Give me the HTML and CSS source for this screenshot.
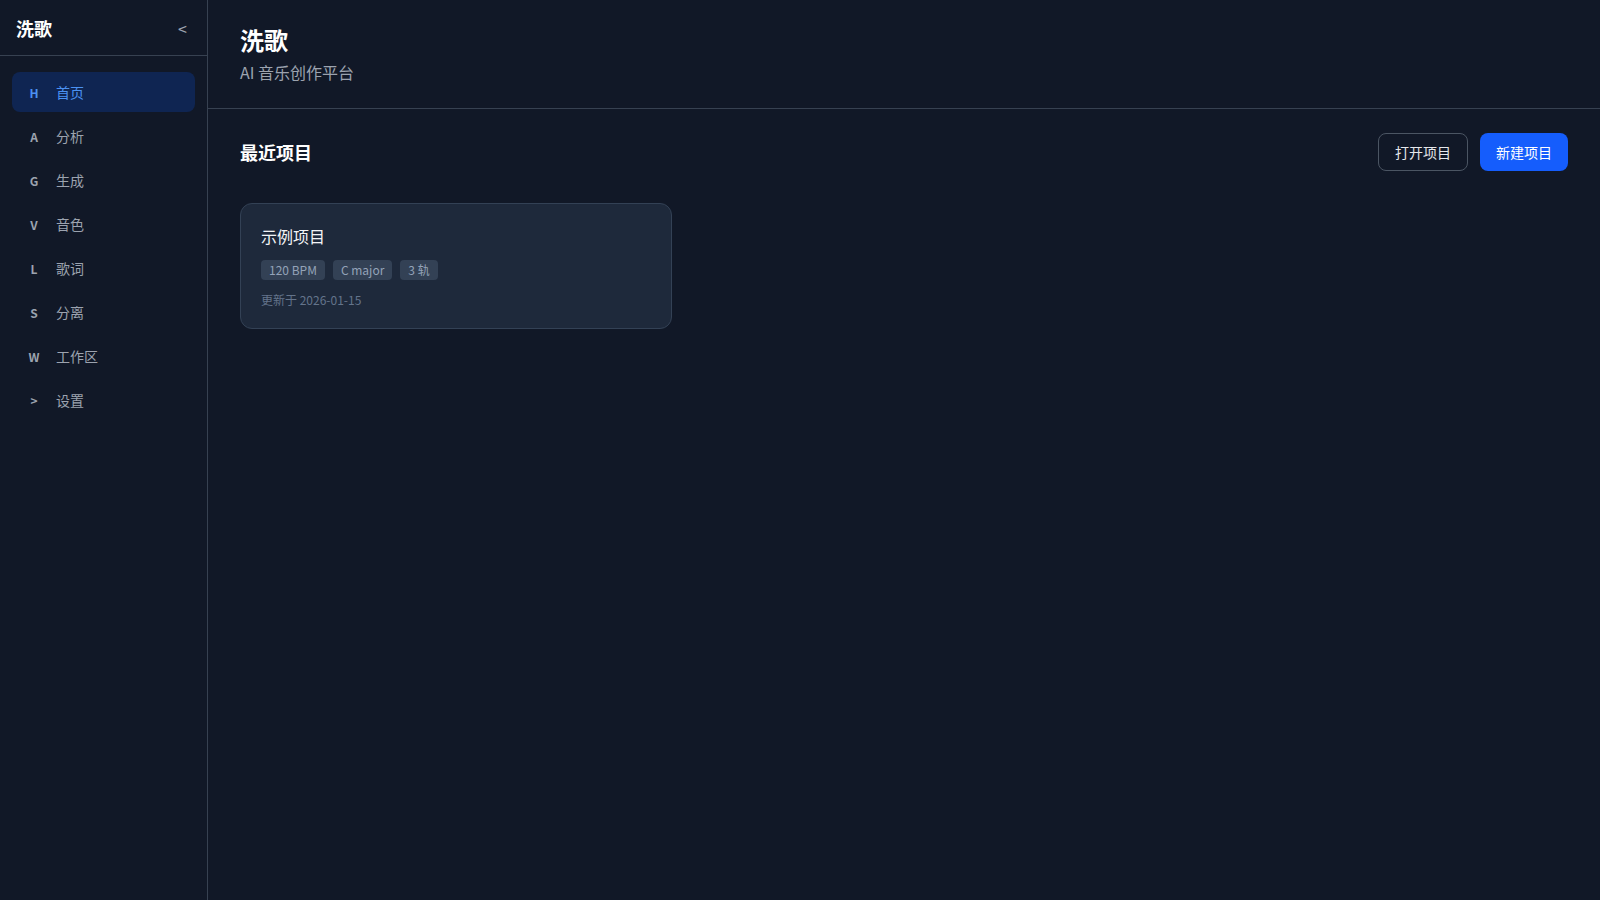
FILE: index.html
```html
<!DOCTYPE html>
<html lang="zh-CN">
<head>
<meta charset="utf-8">
<title>洗歌</title>
<link rel="stylesheet" href="styles.css">
</head>
<body>
<div class="app">
  <aside class="sidebar">
    <div class="sidebar-header">
      <span class="brand">洗歌</span>
      <button class="collapse">&lt;</button>
    </div>
    <nav class="nav">
      <a class="nav-item active"><span class="key">H</span><span>首页</span></a>
      <a class="nav-item"><span class="key">A</span><span>分析</span></a>
      <a class="nav-item"><span class="key">G</span><span>生成</span></a>
      <a class="nav-item"><span class="key">V</span><span>音色</span></a>
      <a class="nav-item"><span class="key">L</span><span>歌词</span></a>
      <a class="nav-item"><span class="key">S</span><span>分离</span></a>
      <a class="nav-item"><span class="key">W</span><span>工作区</span></a>
      <a class="nav-item"><span class="key">&gt;</span><span>设置</span></a>
    </nav>
  </aside>
  <main class="main">
    <header class="page-header">
      <h1 class="page-title">洗歌</h1>
      <p class="page-sub">AI 音乐创作平台</p>
    </header>
    <section class="content">
      <div class="section-head">
        <h2 class="section-title">最近项目</h2>
        <div class="actions">
          <button class="btn btn-outline">打开项目</button>
          <button class="btn btn-primary">新建项目</button>
        </div>
      </div>
      <div class="grid">
        <div class="card">
          <div class="card-title">示例项目</div>
          <div class="tags">
            <span class="tag">120 BPM</span>
            <span class="tag">C major</span>
            <span class="tag">3 轨</span>
          </div>
          <div class="card-date">更新于 2026-01-15</div>
        </div>
      </div>
    </section>
  </main>
</div>
</body>
</html>
```

FILE: styles.css
```css
* { box-sizing: border-box; }
html, body {
  margin: 0;
  height: 100%;
  background: #111827;
  color: #f3f4f6;
  font-family: "Noto Sans CJK SC", "Noto Sans", sans-serif;
}
.app {
  display: flex;
  height: 100vh;
}
.sidebar {
  width: 208px;
  flex-shrink: 0;
  border-right: 1px solid #374151;
  background: #111827;
  display: flex;
  flex-direction: column;
}
.sidebar-header {
  height: 56px;
  border-bottom: 1px solid #374151;
  display: flex;
  align-items: center;
  justify-content: space-between;
  padding: 0 16px;
}
.brand {
  font-size: 18px;
  font-weight: 700;
  color: #ffffff;
}
.collapse {
  background: none;
  border: none;
  color: #9ca3af;
  font-family: inherit;
  font-size: 16px;
  line-height: 20px;
  padding: 0 4px;
  cursor: pointer;
}
.nav {
  padding: 16px 12px;
  display: flex;
  flex-direction: column;
  gap: 4px;
}
.nav-item {
  height: 40px;
  display: flex;
  align-items: center;
  gap: 12px;
  padding: 0 12px;
  border-radius: 8px;
  color: #9ca3af;
  font-size: 14px;
}
.nav-item .key {
  width: 20px;
  text-align: center;
  font-size: 12px;
  font-weight: 700;
}
.nav-item.active {
  background: #0f2552;
  color: #4b91f1;
}
.main {
  flex: 1;
  display: flex;
  flex-direction: column;
  min-width: 0;
}
.page-header {
  height: 109px;
  border-bottom: 1px solid #374151;
  padding: 22px 32px 0;
}
.page-title {
  margin: 0;
  font-size: 24px;
  font-weight: 700;
  line-height: 36px;
  color: #ffffff;
}
.page-sub {
  margin: 0;
  font-size: 16px;
  line-height: 28px;
  color: #9ca3af;
}
.content {
  padding: 24px 32px;
}
.section-head {
  display: flex;
  align-items: center;
  justify-content: space-between;
  margin-bottom: 32px;
}
.section-title {
  margin: 0;
  font-size: 18px;
  font-weight: 700;
  color: #ffffff;
}
.actions {
  display: flex;
  gap: 12px;
}
.btn {
  height: 38px;
  padding: 0 16px;
  border-radius: 8px;
  font-family: inherit;
  font-size: 14px;
  cursor: pointer;
}
.btn-outline {
  background: transparent;
  border: 1px solid #4b5563;
  color: #e5e7eb;
}
.btn-primary {
  background: #155dfc;
  border: none;
  color: #ffffff;
}
.grid {
  display: grid;
  grid-template-columns: repeat(3, 1fr);
  gap: 16px;
}
.card {
  background: #1e293b;
  border: 1px solid #334155;
  border-radius: 12px;
  padding: 20px;
  height: 126px;
}
.card-title {
  font-size: 16px;
  line-height: 24px;
  color: #f3f4f6;
}
.tags {
  display: flex;
  gap: 8px;
  margin-top: 12px;
}
.tag {
  height: 20px;
  line-height: 20px;
  padding: 0 8px;
  border-radius: 4px;
  background: #334155;
  color: #94a3b8;
  font-size: 12px;
}
.card-date {
  margin-top: 11px;
  font-size: 12px;
  line-height: 18px;
  color: #64748b;
}
```
